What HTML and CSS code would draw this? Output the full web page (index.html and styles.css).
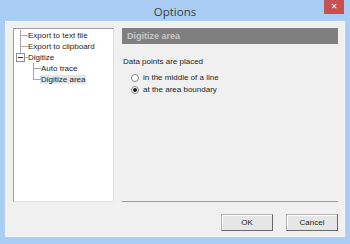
FILE: index.html
```html
<!DOCTYPE html>
<html lang="en">
<head>
    <meta charset="UTF-8">
    <title>Options</title>
    <link rel="stylesheet" href="styles.css">
</head>
<body>
    <div class="window">
        <div class="title-bar">
            <span class="title">Options</span>
            <button class="close-btn">&#x2715;</button>
        </div>
        <div class="client">
            <div class="panes">
                <div class="tree">
                    <div class="node sib">Export to text file</div>
                    <div class="node sib">Export to clipboard</div>
                    <div class="node"><span class="toggle"></span>Digitize</div>
                    <div class="node child sib">Auto trace</div>
                    <div class="node child"><span class="selected">Digitize area</span></div>
                </div>
                <div class="page">
                    <div class="page-header">Digitize area</div>
                    <div class="page-body">
                        <div class="label">Data points are placed</div>
                        <div class="radio-group">
                            <div class="radio"><span class="dot"></span>in the middle of a line</div>
                            <div class="radio"><span class="dot checked"></span>at the area boundary</div>
                        </div>
                    </div>
                </div>
            </div>
            <div class="buttons">
                <button class="btn">OK</button>
                <button class="btn">Cancel</button>
            </div>
        </div>
    </div>
</body>
</html>
```

FILE: styles.css
```css
* {
    margin: 0;
    padding: 0;
    box-sizing: border-box;
}
body {
    font-family: 'Liberation Sans', Arial, sans-serif;
    font-size: 8px;
    color: #1e1e1e;
    background: #a9cdf4;
}
.window {
    width: 350px;
    height: 244px;
    background: #a9cdf4;
    display: flex;
    flex-direction: column;
}
.title-bar {
    height: 21px;
    display: flex;
    justify-content: center;
    align-items: center;
    position: relative;
}
.title {
    font-family: 'Open Sans', 'Noto Sans', sans-serif;
    font-size: 11.5px;
    color: #3b3b3b;
    padding-top: 1px;
}
.close-btn {
    position: absolute;
    top: 0;
    right: 6px;
    width: 20px;
    height: 14px;
    background: #c75050;
    border: none;
    color: #fff;
    font-size: 8px;
    font-weight: bold;
    font-family: 'DejaVu Sans', sans-serif;
    line-height: 14px;
}
.client {
    margin: 0 5px 7px 5px;
    height: 216px;
    background: #f0f0f0;
    border: 1px solid #f6f9fc;
    padding: 6px 6px 0 7px;
    display: flex;
    flex-direction: column;
}
.panes {
    display: flex;
    gap: 8px;
    height: 174px;
}
.tree {
    width: 101px;
    background: #fff;
    border: 1px solid #a0a0a0;
    border-right-color: #e3e3e3;
    border-bottom-color: #e3e3e3;
    padding: 1px 0 0 14px;
}
.node {
    position: relative;
    height: 11px;
    line-height: 11px;
    white-space: nowrap;
}
.node::before {
    content: "";
    position: absolute;
    left: -8px;
    top: 0;
    width: 7px;
    height: 5px;
    border-left: 1px solid #a8a8a8;
    border-bottom: 1px solid #a8a8a8;
}
.node.sib::after {
    content: "";
    position: absolute;
    left: -8px;
    top: 5px;
    height: 6px;
    border-left: 1px solid #a8a8a8;
}
.node.child {
    padding-left: 13px;
}
.node.child::before,
.node.child.sib::after {
    left: 5px;
}
.toggle {
    position: absolute;
    left: -12px;
    top: 1px;
    width: 9px;
    height: 9px;
    background: #fff;
    border: 1px solid #919191;
    z-index: 1;
}
.toggle::after {
    content: "";
    position: absolute;
    left: 1px;
    top: 3px;
    width: 5px;
    border-top: 1px solid #333;
}
.selected {
    background: #e6e6e6;
    padding: 0 1px;
    margin-left: -1px;
}
.page {
    flex: 1;
    display: flex;
    flex-direction: column;
    border-bottom: 1px solid #a0a0a0;
    margin-right: 0;
}
.page-header {
    height: 16px;
    line-height: 16px;
    background: #7f7f7f;
    color: #c8c8c8;
    font-weight: bold;
    font-size: 9px;
    padding-left: 5px;
}
.page-body {
    padding: 12px 0 0 1px;
}
.label {
    height: 11px;
    line-height: 11px;
}
.radio-group {
    margin-top: 5px;
    padding-left: 8px;
    display: flex;
    flex-direction: column;
    gap: 1px;
}
.radio {
    display: flex;
    align-items: center;
    gap: 4px;
    height: 11px;
}
.dot {
    width: 8px;
    height: 8px;
    border-radius: 50%;
    border: 1px solid #8a8a8a;
    background: #fff;
    display: flex;
    align-items: center;
    justify-content: center;
}
.dot.checked::after {
    content: "";
    width: 4px;
    height: 4px;
    border-radius: 50%;
    background: #1e1e1e;
}
.buttons {
    margin-top: 12px;
    display: flex;
    justify-content: flex-end;
    gap: 13px;
}
.btn {
    width: 52px;
    height: 17px;
    font-family: 'Liberation Sans', Arial, sans-serif;
    font-size: 8px;
    color: #1e1e1e;
    background: #e6e6e6;
    border: 1px solid;
    border-color: #b4b4b4 #696969 #696969 #b4b4b4;
    box-shadow: inset 1px 1px 0 #fdfdfd;
}
```
